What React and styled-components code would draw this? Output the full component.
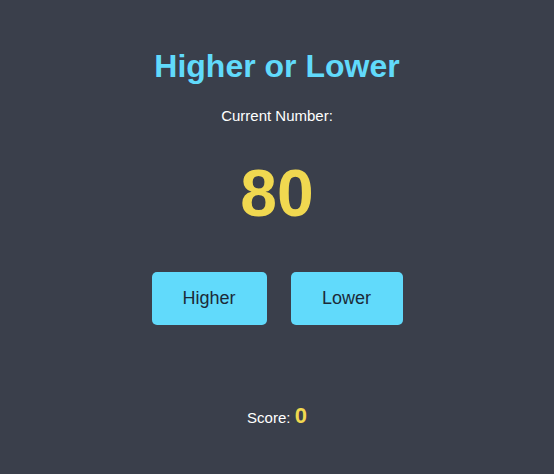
import React, { useState } from "react";
import styled, { createGlobalStyle } from "styled-components";

const GlobalStyle = createGlobalStyle`
  html, body {
    margin: 0;
    padding: 0;
    background-color: #3a3f4b;
  }
  body {
    font-family: "Liberation Sans", Arial, sans-serif;
  }
`;

const Game = styled.div`
  display: flex;
  flex-direction: column;
  align-items: center;
  min-height: 474px;
  box-sizing: border-box;
  padding-top: 48px;
  color: #ffffff;
`;

const Title = styled.h1`
  margin: 0;
  font-size: 32px;
  line-height: 37px;
  font-weight: bold;
  color: #61dafb;
`;

const Label = styled.p`
  margin: 22px 0 0;
  font-size: 15px;
  line-height: 18px;
`;

const Current = styled.div`
  margin-top: 30px;
  font-size: 66px;
  line-height: 76px;
  font-weight: bold;
  color: #f0d850;
`;

const Buttons = styled.div`
  display: flex;
  gap: 24px;
  margin-top: 41px;
`;

const Button = styled.button`
  width: ${(props) => props.$width}px;
  height: 53px;
  border: none;
  border-radius: 5px;
  background-color: #61dafb;
  color: #1c2a38;
  font-family: "Liberation Sans", Arial, sans-serif;
  font-size: 18px;
  cursor: pointer;
`;

const Score = styled.p`
  margin: 78px 0 0;
  font-size: 15px;
  line-height: 26px;
`;

const ScoreValue = styled.span`
  font-size: 22px;
  font-weight: bold;
  color: #f0d850;
`;

export default function App() {
  const [number, setNumber] = useState(80);
  const [score, setScore] = useState(0);

  const guess = (higher) => {
    const next = Math.floor(Math.random() * 100) + 1;
    if ((higher && next > number) || (!higher && next < number)) {
      setScore(score + 1);
    } else {
      setScore(0);
    }
    setNumber(next);
  };

  return (
    <>
      <GlobalStyle />
      <Game>
        <Title>Higher or Lower</Title>
        <Label>Current Number:</Label>
        <Current>{number}</Current>
        <Buttons>
          <Button $width={115} onClick={() => guess(true)}>
            Higher
          </Button>
          <Button $width={112} onClick={() => guess(false)}>
            Lower
          </Button>
        </Buttons>
        <Score>
          Score: <ScoreValue>{score}</ScoreValue>
        </Score>
      </Game>
    </>
  );
}
